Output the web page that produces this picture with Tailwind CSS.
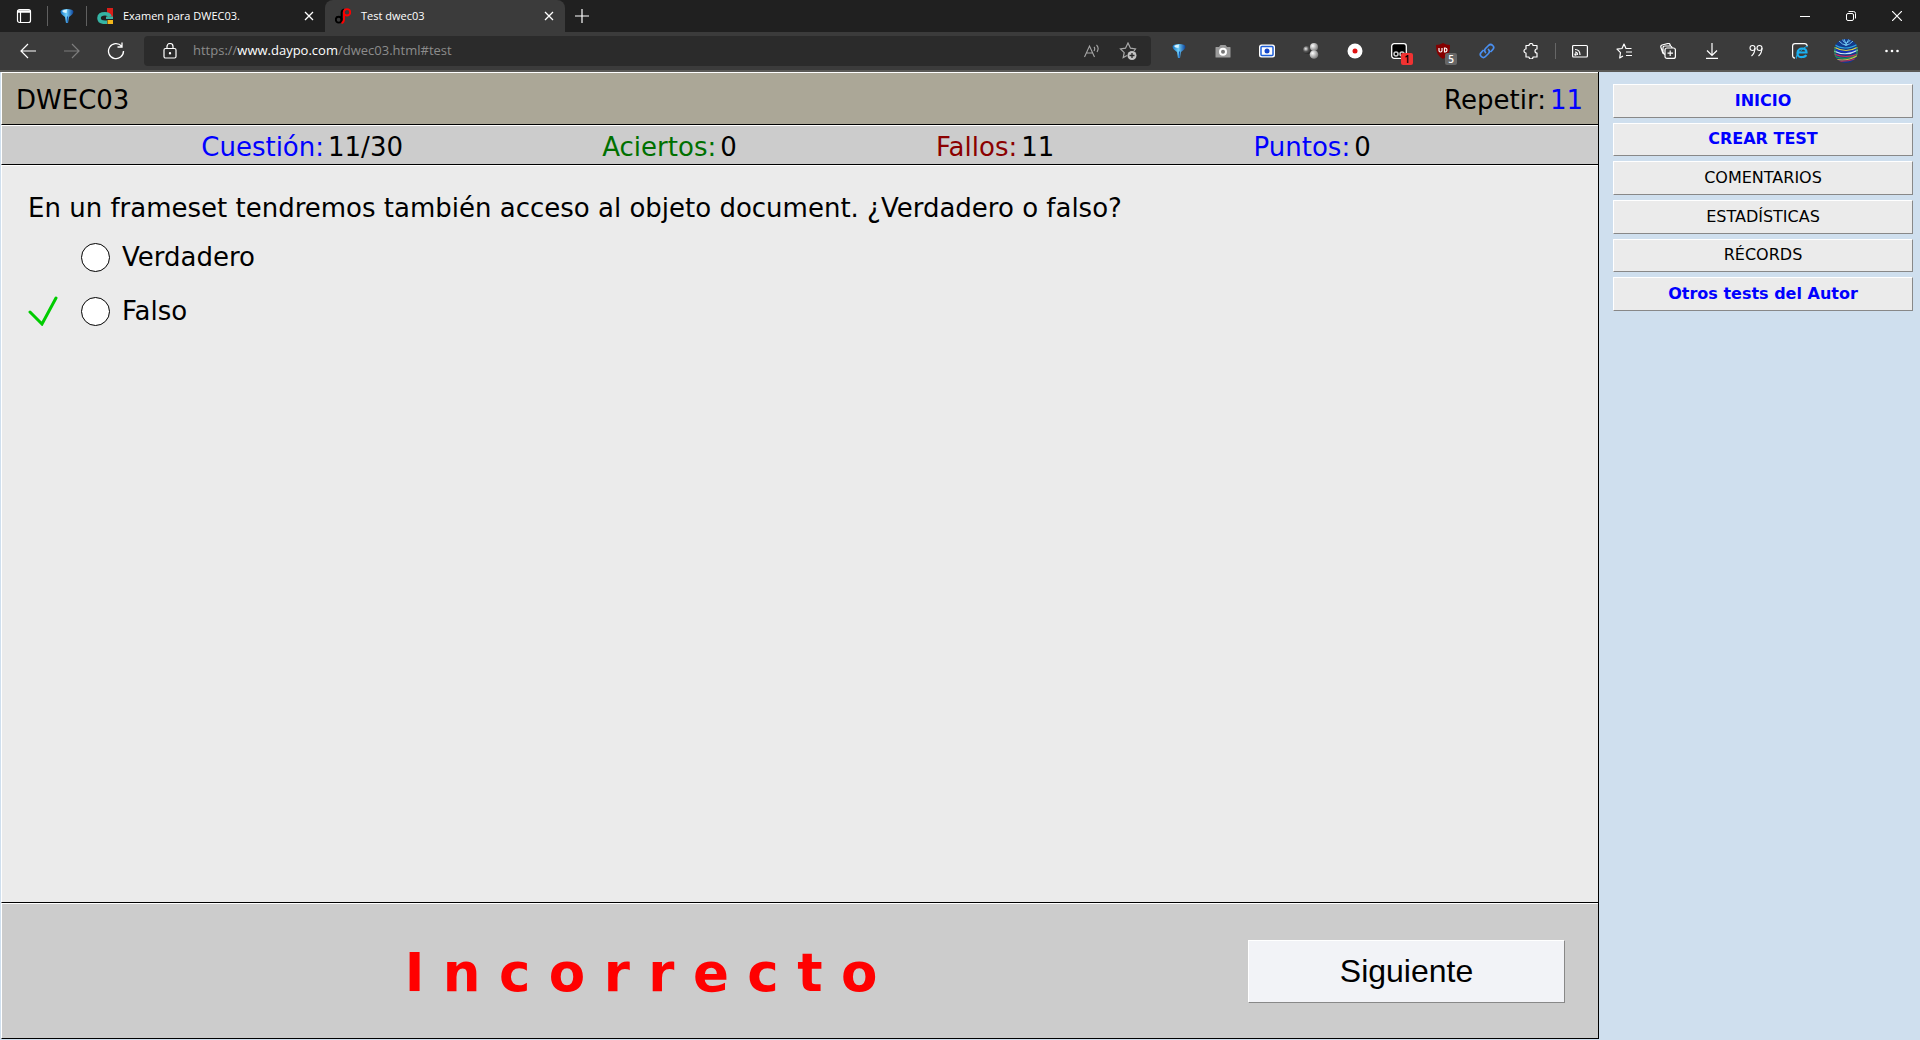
<!DOCTYPE html>
<html lang="es">
<head>
<meta charset="utf-8">
<title>Test dwec03</title>
<script src="https://cdn.jsdelivr.net/npm/@tailwindcss/browser@4"></script>
</head>
<body class="flex min-h-screen flex-col bg-[#cfdfee] font-['DejaVu_Sans',sans-serif] text-black">

<svg class="absolute size-0" aria-hidden="true">
  <defs>
    <linearGradient id="blue" x1="0" x2="1" y1="0" y2="0"><stop offset="0" stop-color="#1271c4"/><stop offset=".45" stop-color="#6fd0fa"/><stop offset="1" stop-color="#0a3f97"/></linearGradient>
    <radialGradient id="ball" cx=".35" cy=".35" r=".7"><stop offset="0" stop-color="#fff"/><stop offset="1" stop-color="#777"/></radialGradient>
    <radialGradient id="darkball" cx=".35" cy=".35" r=".7"><stop offset="0" stop-color="#eee"/><stop offset=".5" stop-color="#555"/><stop offset="1" stop-color="#222"/></radialGradient>
    <symbol id="gem" viewBox="0 0 16 16"><path d="M1.500 3.500Q2 1 8 1t6.500 2.500Q14.500 6 10 9L9 15H7L6 9Q1.500 6 1.500 3.500Z" fill="url(#blue)"/><path d="M3 3q2-1.500 5-1.300L7.500 5Q4 5 3 3Z" fill="#d8f4ff"/><path d="M9 9 8.500 15H7.500L8 8Z" fill="#0b4fae"/></symbol>
    <symbol id="x" viewBox="0 0 10 10"><path d="M1 1l8 8M9 1l-8 8" fill="none" stroke="currentColor" stroke-width="1.300"/></symbol>
  </defs>
</svg>

<header class="border-b-2 border-[#5a5956] bg-[#3b3b3b] font-['Open_Sans',sans-serif] text-[11px] text-white">
  <div class="flex h-8 items-center bg-[#202020]">
    <button class="flex h-8 w-[47px] items-center justify-center" aria-label="Menú de pestañas">
      <svg class="size-4" viewBox="0 0 16 16" fill="none" stroke="#fff" stroke-width="1.200"><rect x="1.500" y="1.500" width="13" height="13" rx="2"/><path d="M1.500 3.500h13" stroke-width="2.500"/><path d="M4.500 4v10.500"/></svg>
    </button>
    <div class="h-5 w-px bg-[#606060]"></div>
    <button class="flex h-8 w-[38px] items-center justify-center" aria-label="Pestaña anclada"><svg class="size-4"><use href="#gem"/></svg></button>
    <div class="h-5 w-px bg-[#606060]"></div>
    <div class="flex h-8 w-[238px] items-center gap-[10px] pr-2 pl-2.5">
      <svg class="size-4" viewBox="0 0 16 16"><path d="M10 0h6v11h-6z" fill="#d91e18"/><path d="M13 8.500Q12 5.700 8 5.700q-6 0-6 4.300t6 4.300h2" fill="none" stroke="#35b5a5" stroke-width="3.600"/><path d="M7 8h2v3H7z" fill="#202020"/><path d="M9 8.500h7V11H9z" fill="#35b5a5"/><path d="M10.500 12H16v4h-5.500z" fill="#f3b71b"/></svg>
      <a href="#examen" class="flex-1">Examen para DWEC03.</a>
      <button aria-label="Cerrar pestaña" class="p-[3px]"><svg class="size-2.5"><use href="#x"/></svg></button>
    </div>
    <div class="flex h-8 w-60 items-center gap-[10px] rounded-t-lg bg-[#3b3b3b] pr-2 pl-2.5">
      <svg class="size-4" viewBox="0 0 16 16" fill="none" stroke-width="1.900"><circle cx="3.700" cy="11.700" r="2.900" stroke="#000"/><path d="M6.600 15V5Q6.600 2 9 1.300" stroke="#000"/><path d="M6.500 15.200Q9 14.500 9 11V5" stroke="#f00"/><circle cx="12" cy="4.300" r="3.200" stroke="#f00"/></svg>
      <a href="#test" class="flex-1">Test dwec03</a>
      <button aria-label="Cerrar pestaña" class="p-[3px]"><svg class="size-2.5"><use href="#x"/></svg></button>
    </div>
    <button class="flex h-8 w-[34px] items-center justify-center" aria-label="Nueva pestaña"><svg class="size-4" viewBox="0 0 16 16" stroke="#fff" stroke-width="1.200"><path d="M8 1v14M1 8h14"/></svg></button>
    <div class="ml-auto flex">
      <button class="flex h-8 w-[46px] items-center justify-center" aria-label="Minimizar"><svg class="size-2.5" viewBox="0 0 10 10"><path d="M0 5.500h10" stroke="#fff"/></svg></button>
      <button class="flex h-8 w-[46px] items-center justify-center" aria-label="Restaurar"><svg class="size-2.5" viewBox="0 0 10 10" fill="none" stroke="#fff"><rect x=".5" y="2.500" width="7" height="7" rx="1.500"/><path d="M2.500 .5h5q2 0 2 2v5"/></svg></button>
      <button class="flex h-8 w-[46px] items-center justify-center" aria-label="Cerrar"><svg class="size-2.5" viewBox="0 0 10 10" stroke="#fff" stroke-width="1.200"><path d="M0 0l10 10M10 0L0 10"/></svg></button>
    </div>
  </div>

  <div class="flex h-[38px] items-center px-1.5">
    <button class="flex w-11 justify-center" aria-label="Atrás"><svg class="size-4" viewBox="0 0 16 16" fill="none" stroke="#fff" stroke-width="1.200"><path d="M16 8H1M8 1L1 8l7 7"/></svg></button>
    <button class="flex w-11 justify-center" aria-label="Adelante"><svg class="size-4" viewBox="0 0 16 16" fill="none" stroke="#7d7d7d" stroke-width="1.200"><path d="M0 8h15M8 1l7 7-7 7"/></svg></button>
    <button class="mr-1.5 flex w-11 justify-center" aria-label="Actualizar"><svg class="size-[18px]" viewBox="0 0 18 18" fill="none" stroke="#fff" stroke-width="1.300"><path d="M16.500 9A7.500 7.500 0 1 1 14.500 4M15 .5V5h-4.500"/></svg></button>
    <div class="flex h-[30px] flex-1 items-center rounded bg-[#2b2b2b] pr-3.5 pl-[18px]">
      <svg class="size-4" viewBox="0 0 16 16" fill="none" stroke="#fff" stroke-width="1.200"><rect x="2" y="5.500" width="12" height="9.500" rx="1.500"/><path d="M5 5.500V3.500a3 3 0 0 1 6 0v2"/><circle cx="8" cy="10.300" r=".6" fill="#fff"/></svg>
      <a href="#test" class="ml-[15px] flex-1 text-[13px] text-[#8c8c8c]">https://<span class="text-white">www.daypo.com</span>/dwec03.html#test</a>
      <button class="mr-[19px]" aria-label="Leer en voz alta"><svg class="size-4" viewBox="0 0 16 16" fill="none" stroke="#a8a8a8" stroke-width="1.100"><path d="M.5 14L5.500 3l5 11M2.500 10h6M10 4q1.500 1.500 0 4M12.500 2q3 3 .5 7"/></svg></button>
      <button aria-label="Añadir a favoritos"><svg class="size-[18px]" viewBox="0 0 18 18" fill="none" stroke="#a8a8a8" stroke-width="1.200"><path d="M15 9l1.500-2-5-.8L9 1 6.500 6.200l-5 .8 3.700 3.600-1 5L8 13.500"/><circle cx="13" cy="13.500" r="4.500" fill="#c4c4c4" stroke="none"/><path d="M13 11v5M10.500 13.500h5" stroke="#2b2b2b" stroke-width="1.300"/></svg></button>
    </div>
    <div class="ml-1.5 flex items-center">
      <button class="flex w-11 justify-center" aria-label="Extensión azul"><svg class="size-4"><use href="#gem"/></svg></button>
      <button class="flex w-11 justify-center" aria-label="Captura"><svg class="size-4" viewBox="0 0 16 16"><path d="M1 4h3l1.500-2h5L12 4h3q.5 0 .5.500v9.500q0 .5-.5.500H1q-.5 0-.5-.5V4.500Q.5 4 1 4Z" fill="#9b9b9b"/><circle cx="8" cy="8.800" r="4" fill="#fff"/><circle cx="8" cy="8.800" r="2" fill="#777"/></svg></button>
      <button class="flex w-11 justify-center" aria-label="Visor"><svg class="size-4" viewBox="0 0 16 16"><rect y="1.500" width="16" height="13" rx="2.500" fill="#fff"/><rect x="2" y="3.500" width="12" height="9" rx="1" fill="none" stroke="#1f5fd8" stroke-width="1.500"/><circle cx="8" cy="8" r="2.500" fill="#1546c8"/></svg></button>
      <button class="flex w-11 justify-center" aria-label="Esferas"><svg class="size-4" viewBox="0 0 16 16"><circle cx="4" cy="7" r="4" fill="url(#darkball)"/><circle cx="11" cy="4" r="4" fill="url(#ball)"/><circle cx="11" cy="11.500" r="4.300" fill="url(#ball)"/></svg></button>
      <button class="flex w-11 justify-center" aria-label="Grabar"><svg class="size-4" viewBox="0 0 16 16"><circle cx="8" cy="8" r="7.500" fill="#fff"/><circle cx="8" cy="8" r="2.500" fill="#e01313"/></svg></button>
      <button class="relative flex w-11 justify-center" aria-label="Scripts, 1"><svg class="size-4" viewBox="0 0 16 16"><rect x=".7" y=".7" width="14.600" height="14.600" rx="2.500" fill="#000" stroke="#fff" stroke-width="1.300"/><circle cx="5" cy="11" r="2" fill="none" stroke="#ccc" stroke-width="1.500"/><circle cx="11" cy="11" r="2" fill="none" stroke="#ccc" stroke-width="1.500"/></svg><span class="absolute top-2.5 left-6 h-3 w-3 rounded-xs bg-[#f03232] text-center text-[10px] leading-3 font-semibold text-black">1</span></button>
      <button class="relative flex w-11 justify-center" aria-label="Bloqueador, 5"><svg class="size-4" viewBox="0 0 16 16"><path d="M8 0q3 2 7 2 .5 10-7 14Q.5 12 1 2q4 0 7-2Z" fill="#850000"/><path d="M4 5v2.500q0 1.500 1.500 1.500T7 7.500V5M9.500 5v4h.8q1.700-.3 1.700-2t-1.700-2Z" fill="none" stroke="#fff" stroke-width="1.200"/></svg><span class="absolute top-2.5 left-6 h-3 w-3 rounded-xs bg-[#666] text-center text-[10px] leading-3 font-semibold">5</span></button>
      <button class="flex w-11 justify-center" aria-label="Enlace"><svg class="size-4" viewBox="0 0 16 16" fill="none" stroke="#4a8ff0" stroke-width="1.700" stroke-linecap="round"><path d="M6.500 9.500a3 3 0 0 1 0-4l3-3a2.900 2.900 0 0 1 4.200 4.200L12 8.500M9.500 6.500a3 3 0 0 1 0 4l-3 3a2.900 2.900 0 0 1-4.200-4.200L4 7.500"/></svg></button>
      <button class="flex w-11 justify-center" aria-label="Extensiones"><svg class="size-4" viewBox="0 0 16 16" fill="none" stroke="#fff" stroke-width="1.200"><path d="M3 2.500h3a2 2 0 0 1 4 0h4v3.500a2 2 0 1 0 0 4v4h-4a2 2 0 0 1-4 0H3v-4a2 2 0 0 1 0-4Z" stroke-linejoin="round"/></svg></button>
    </div>
    <div class="mx-0.5 h-4 w-px bg-[#666]"></div>
    <div class="flex items-center">
      <button class="flex w-11 justify-center" aria-label="Transmitir"><svg class="size-4" viewBox="0 0 16 16" fill="none" stroke="#fff" stroke-width="1.200"><rect x=".6" y="2.500" width="14.800" height="11.500" rx="1"/><path d="M3 6.500q5 0 5 5.500M3 9q2.500 0 2.500 3"/><circle cx="3.500" cy="11.500" r=".6" fill="#fff"/></svg></button>
      <button class="flex w-11 justify-center" aria-label="Favoritos"><svg class="size-4" viewBox="0 0 16 16" fill="none" stroke="#fff" stroke-width="1.200"><path d="M15.500 5.500H10L8 1 6 5.500l-5 .7 3.500 3.500-.8 5.300L7 13M10 9h6M10 12.500h6" stroke-linejoin="round"/></svg></button>
      <button class="flex w-11 justify-center" aria-label="Colecciones"><svg class="size-4" viewBox="0 0 16 16" fill="none" stroke="#fff" stroke-width="1.200"><rect x="5" y="5" width="10.400" height="10.400" rx="2"/><path d="M10.200 7.500v5.500M7.500 10.200H13M3 10.500L.8 4Q.5 2.500 2 2l6-1.500q1.500-.3 2 1l.5 1.500M5 11.500Q3.500 11 3 9V5q0-2 2-2h5q2 0 2 2"/></svg></button>
      <button class="flex w-11 justify-center" aria-label="Descargas"><svg class="size-4" viewBox="0 0 16 16" fill="none" stroke="#fff" stroke-width="1.200"><path d="M8 0v12M3 7.500l5 5 5-5M2 15.400h12"/></svg></button>
      <button class="flex w-11 justify-center" aria-label="Citar"><svg class="size-4" viewBox="0 0 16 16" fill="none" stroke="#fff" stroke-width="1.100"><circle cx="4.500" cy="5" r="2.500"/><path d="M7 5q0 5-3.500 8"/><circle cx="11.500" cy="5" r="2.500"/><path d="M14 5q0 5-3.500 8"/></svg></button>
      <button class="flex w-11 justify-center" aria-label="Modo Internet Explorer"><svg class="size-4" viewBox="0 0 16 16" fill="none"><path d="M3 15.200Q.6 15 .6 12.500V3Q.6.600 3 .600h9.500Q15 .6 15.200 3" stroke="#fff" stroke-width="1.200"/><path d="M5.500 9.500h9q0-4-4.300-4t-4.700 4.500 4.700 4q3 0 4-2" stroke="#1ab0f0" stroke-width="2.200"/><path d="M4.500 15.500Q3 13 9 7.500T16 4" stroke="#1ab0f0"/></svg></button>
      <button class="flex w-12 justify-center" aria-label="Perfil"><svg class="size-6" viewBox="0 0 24 24" fill="none" stroke-width="1.200"><clipPath id="round"><circle cx="12" cy="12" r="12"/></clipPath><g clip-path="url(#round)"><path d="M0 0h24v24H0z" fill="#123a8c"/><path d="M0 5q10 8 24 0" stroke="#2fa6dd"/><path d="M0 8q12 7 24 0" stroke="#d8d04a"/><path d="M0 10q12 6 24 0" stroke="#1c2fd0"/><path d="M0 12q12 6 24-1" stroke="#c8e5f5"/><path d="M0 15q12 5 24 0" stroke="#d32b59"/><path d="M0 17q12 5 24-1" stroke="#2a9c4c"/><path d="M1 20q11 3 22-3" stroke="#e0c23c"/><path d="M3 22q9 1 18-2" stroke="#c23050"/><path d="M8 0q4 8 9 0M5 2q7 8 14 0M10 0l3 7M15 0l-4 7" stroke="#6fc3ef" stroke-width="1"/><path d="M1 8v9M23 8v8" stroke="#2fa04c"/></g></svg></button>
      <button class="flex w-11 justify-center" aria-label="Más"><svg class="size-4" viewBox="0 0 16 16" fill="#fff"><circle cx="2.500" cy="8" r="1.300"/><circle cx="8" cy="8" r="1.300"/><circle cx="13.500" cy="8" r="1.300"/></svg></button>
    </div>
  </div>
</header>

<div class="flex flex-1 pb-px pl-px">
  <main class="flex flex-1 flex-col border-r border-black text-[26px] leading-8">
    <div class="flex h-[53px] items-center justify-between border-t border-b border-l border-t-white border-b-black border-l-white bg-[#aba797] pt-0.5 pr-[15px] pl-3.5">
      <h1>DWEC03</h1>
      <p class="flex gap-1">Repetir:<a href="#repetir" class="text-[#0000ff]">11</a></p>
    </div>
    <dl class="flex h-10 items-center justify-evenly border-t border-b border-l border-t-white border-b-black border-l-white bg-[#cccccc] pt-1 pr-7">
      <div class="flex gap-1"><dt class="text-[#0000ff]">Cuestión:</dt><dd>11/30</dd></div>
      <div class="flex gap-1"><dt class="text-[#007000]">Aciertos:</dt><dd>0</dd></div>
      <div class="flex gap-1"><dt class="text-[#8b0000]">Fallos:</dt><dd>11</dd></div>
      <div class="flex gap-1"><dt class="text-[#0000ff]">Puntos:</dt><dd>0</dd></div>
    </dl>
    <fieldset class="flex-1 border-t border-b border-l border-t-white border-b-black border-l-white bg-[#ebebeb] px-[26px] pt-[26px]">
      <legend class="float-left w-full">En un frameset tendremos también acceso al objeto document. ¿Verdadero o falso?</legend>
      <div class="clear-both flex flex-col pt-1.5">
        <div class="flex h-[54px] items-center">
          <div class="w-[53px]"></div>
          <input type="radio" name="respuesta" id="verdadero" class="size-[29px] appearance-none rounded-full border border-black bg-white">
          <label for="verdadero" class="pl-3">Verdadero</label>
        </div>
        <div class="flex h-[54px] items-center">
          <div class="w-[53px]"><svg class="size-[30px]" viewBox="0 0 30 30" fill="none" stroke="#00cc00" stroke-width="3" stroke-linecap="round"><path d="M2 16l12 12L28 2"/></svg></div>
          <input type="radio" name="respuesta" id="falso" class="size-[29px] appearance-none rounded-full border border-black bg-white">
          <label for="falso" class="pl-3">Falso</label>
        </div>
      </div>
    </fieldset>
    <div class="flex h-[136px] items-center border-t border-b border-l border-t-white border-b-black border-l-white bg-[#cccccc] pr-[33px]">
      <p class="flex-1 pt-1 pl-8 text-center text-[53px] leading-[64px] font-bold text-[#ff0000]">I n c o r r e c t o</p>
      <button class="h-[63px] w-[317px] border border-t-white border-r-[#888] border-b-[#888] border-l-white bg-[#f2f3f7] font-['Liberation_Sans',sans-serif] text-[32px]">Siguiente</button>
    </div>
  </main>

  <nav class="w-[321px] pt-3 pr-[7px] pl-3.5 text-center text-base">
    <div class="grid h-[227px] grid-rows-6 gap-[5px]">
      <a href="#inicio" class="flex items-center justify-center border border-t-white border-r-[#888] border-b-[#888] border-l-white bg-[#ebebeb] font-bold text-[#0000ff]">INICIO</a>
      <a href="#crear" class="flex items-center justify-center border border-t-white border-r-[#888] border-b-[#888] border-l-white bg-[#ebebeb] font-bold text-[#0000ff]">CREAR TEST</a>
      <a href="#comentarios" class="flex items-center justify-center border border-t-white border-r-[#888] border-b-[#888] border-l-white bg-[#ebebeb]">COMENTARIOS</a>
      <a href="#estadisticas" class="flex items-center justify-center border border-t-white border-r-[#888] border-b-[#888] border-l-white bg-[#ebebeb]">ESTADÍSTICAS</a>
      <a href="#records" class="flex items-center justify-center border border-t-white border-r-[#888] border-b-[#888] border-l-white bg-[#ebebeb]">RÉCORDS</a>
      <a href="#otros" class="flex items-center justify-center border border-t-white border-r-[#888] border-b-[#888] border-l-white bg-[#ebebeb] font-bold text-[#0000ff]">Otros tests del Autor</a>
    </div>
  </nav>
</div>
</body>
</html>
